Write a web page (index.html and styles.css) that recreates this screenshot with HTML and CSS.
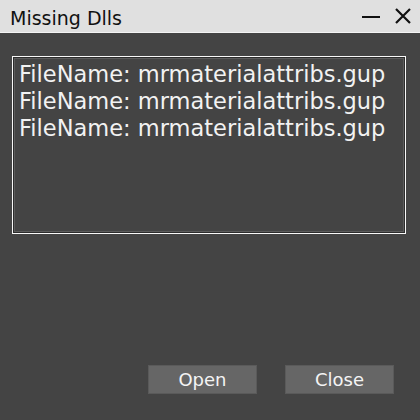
FILE: index.html
```html
<!DOCTYPE html>
<html>
<head>
<meta charset="utf-8">
<link rel="stylesheet" href="styles.css">
</head>
<body>
<div class="window">
  <div class="titlebar">
    <span class="title">Missing Dlls</span>
    <div class="controls">
      <svg class="ctl" width="20" height="20" viewBox="0 0 20 20"><path d="M1 11h18" stroke="#111" stroke-width="2"/></svg>
      <svg class="ctl" width="18" height="18" viewBox="0 0 18 18"><path d="M2 2L16 16M16 2L2 16" stroke="#111" stroke-width="2.2"/></svg>
    </div>
  </div>
  <div class="content">
    <div class="listbox">
      <div class="item">FileName: mrmaterialattribs.gup</div>
      <div class="item">FileName: mrmaterialattribs.gup</div>
      <div class="item">FileName: mrmaterialattribs.gup</div>
    </div>
    <div class="buttons">
      <button class="btn">Open</button>
      <button class="btn">Close</button>
    </div>
  </div>
</div>
</body>
</html>
```
FILE: styles.css
```css
html, body {
  margin: 0;
  padding: 0;
  background: #444444;
  width: 420px;
  height: 420px;
  overflow: hidden;
  font-family: "DejaVu Sans", sans-serif;
}
.window {
  display: flex;
  flex-direction: column;
  height: 420px;
}
.titlebar {
  height: 32px;
  background: #e0e0e0;
  border-bottom: 1px solid #f4f4f4;
  display: flex;
  align-items: center;
  justify-content: space-between;
  padding: 0 8px 0 10px;
}
.title {
  font-size: 19px;
  color: #111;
  margin-top: 3px;
}
.controls {
  display: flex;
  align-items: center;
  gap: 13px;
}
.ctl {
  display: block;
}
.content {
  flex: 1;
  display: flex;
  flex-direction: column;
  padding: 23px 14px 0 12px;
}
.listbox {
  height: 172px;
  border: 1px solid #f8f8f8;
  box-shadow: inset 0 0 0 1px #2c2c2c, inset 0 0 0 2px #5c5c5c;
  padding: 4px 4px 0;
  color: #f2f2f2;
  font-size: 22.5px;
  line-height: 27px;
}
.item {
  white-space: nowrap;
  padding-left: 2px;
}
.buttons {
  display: flex;
  justify-content: flex-end;
  gap: 28px;
  margin-top: 131px;
  padding-right: 12px;
}
.btn {
  width: 109px;
  height: 29px;
  background: #666666;
  border: 1px solid #5a5a5a;
  color: #f4f4f4;
  font-family: "DejaVu Sans", sans-serif;
  font-size: 18px;
  padding: 0;
  margin: 0;
}
```
